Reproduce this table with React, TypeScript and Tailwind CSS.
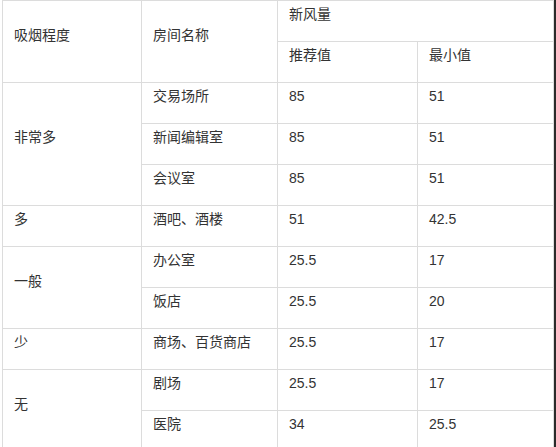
import React from "react";

type Cell = { text: string; cls?: string };

const cells: Cell[] = [
  { text: "吸烟程度", cls: "row-span-2" },
  { text: "房间名称", cls: "row-span-2" },
  { text: "新风量", cls: "col-span-2" },
  { text: "推荐值" },
  { text: "最小值" },
  { text: "非常多", cls: "row-span-3" },
  { text: "交易场所" },
  { text: "85" },
  { text: "51" },
  { text: "新闻编辑室" },
  { text: "85" },
  { text: "51" },
  { text: "会议室" },
  { text: "85" },
  { text: "51" },
  { text: "多" },
  { text: "酒吧、酒楼" },
  { text: "51" },
  { text: "42.5" },
  { text: "一般", cls: "row-span-2" },
  { text: "办公室" },
  { text: "25.5" },
  { text: "17" },
  { text: "饭店" },
  { text: "25.5" },
  { text: "20" },
  { text: "少" },
  { text: "商场、百货商店" },
  { text: "25.5" },
  { text: "17" },
  { text: "无", cls: "row-span-2" },
  { text: "剧场" },
  { text: "25.5" },
  { text: "17" },
  { text: "医院" },
  { text: "34" },
  { text: "25.5" },
];

export default function App() {
  return (
    <div
      className="flex w-[556px] h-[447px] overflow-hidden bg-white text-[#333] text-[14px] leading-[21px]"
      style={{ fontFamily: '"Liberation Sans", "Noto Sans CJK SC", sans-serif' }}
    >
      <div className="ml-[2px] shrink-0 self-start grid grid-cols-[138px_135px_139px_135px] auto-rows-[40px] gap-px p-px bg-[#dcdcdc]">
        {cells.map((c, i) => (
          <div
            key={i}
            className={`bg-white flex items-center pl-[11px] pr-2 pt-[3px] pb-[16px] whitespace-nowrap ${c.cls ?? ""}`}
          >
            {c.text}
          </div>
        ))}
      </div>
      <div className="flex-1 bg-white" />
      <div className="w-[2px] shrink-0 bg-[#2b2b2b]" />
    </div>
  );
}
